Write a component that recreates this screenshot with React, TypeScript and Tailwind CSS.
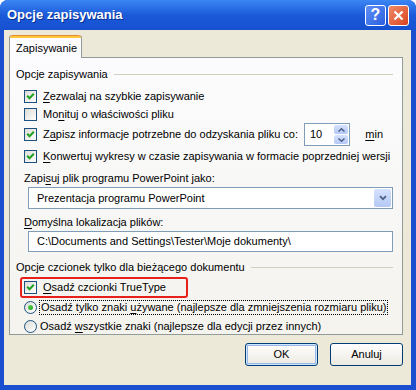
import React from "react";

function Check({ checked }: { checked: boolean }) {
  return (
    <span className="relative flex h-[13px] w-[13px] shrink-0 items-center justify-center border border-[#1c5180] bg-gradient-to-br from-[#dcdcd7] to-white">
      {checked && (
        <svg width="9" height="9" viewBox="0 0 9 9">
          <path d="M1.2 3.8 L3.5 6.2 L7.8 1.8" stroke="#21a121" strokeWidth="2" fill="none" />
        </svg>
      )}
    </span>
  );
}

function Radio({ checked }: { checked: boolean }) {
  return (
    <span className="flex h-[13px] w-[13px] shrink-0 items-center justify-center rounded-full border border-[#1c5180] bg-gradient-to-br from-[#dcdcd7] to-white">
      {checked && <span className="h-[5px] w-[5px] rounded-full bg-gradient-to-br from-[#55d751] to-[#21a121]" />}
    </span>
  );
}

function U({ children }: { children: React.ReactNode }) {
  return <span className="underline underline-offset-[2px]">{children}</span>;
}

function GroupLabel({ text }: { text: string }) {
  return (
    <div className="flex h-[14px] items-center pr-[9px]">
      <span className="whitespace-nowrap">{text}</span>
      <span className="ml-[6px] h-px flex-1 bg-[#d0d0bf]" />
    </div>
  );
}

export default function App() {
  return (
    <div className="h-[390px] w-[416px] overflow-hidden bg-white font-['Liberation_Sans',Arial,sans-serif] text-[11px] text-black">
      <div className="flex h-[390px] w-[416px] flex-col rounded-t-[8px] bg-[#1a4fd0]">
        {/* title bar */}
        <div className="flex h-[30px] shrink-0 items-center rounded-t-[8px] bg-gradient-to-b from-[#3c86f5] via-[#1b5ad9] to-[#1550cf] pl-[7px] pr-[7px]">
          <span className="flex-1 text-[13px] font-bold text-white [text-shadow:1px_1px_0_#0a2f8f]">Opcje zapisywania</span>
          <div className="flex gap-[2px]">
            <div className="flex h-[21px] w-[21px] items-center justify-center rounded-[3px] border border-white bg-gradient-to-br from-[#5f8ff5] to-[#2a5ee0] text-[16px] font-bold leading-none text-white">?</div>
            <div className="flex h-[21px] w-[21px] items-center justify-center rounded-[3px] border border-white bg-gradient-to-br from-[#f08a66] to-[#d8421c]">
              <svg width="11" height="11" viewBox="0 0 11 11">
                <path d="M1.5 1.5 L9.5 9.5 M9.5 1.5 L1.5 9.5" stroke="white" strokeWidth="2.2" />
              </svg>
            </div>
          </div>
        </div>
        {/* body */}
        <div className="ml-[4px] mr-[5px] flex h-[355px] flex-col bg-[#ece9d8] pl-[5px] pr-[8px] pt-[5px]">
          {/* tab */}
          <div className="relative z-10 -mb-px flex h-[23px] w-[73px] flex-col rounded-t-[3px] border-x border-[#919b9c] bg-[#fcfcfe]">
            <div className="h-[3px] rounded-t-[3px] border-t border-[#e68b2c] bg-[#ffc83c]" />
            <div className="flex flex-1 items-center pl-[6px]">Zapisywanie</div>
          </div>
          {/* panel */}
          <div className="flex h-[278px] flex-col border border-[#919b9c] bg-gradient-to-b from-[#fcfcfe] to-[#f4f3ee] pl-[6px] pt-[9px]">
            <GroupLabel text="Opcje zapisywania" />
            <div className="mt-[6px] flex h-[18px] items-center gap-[6px] pl-[8px]">
              <Check checked />
              <span><U>Z</U>ezwalaj na szybkie zapisywanie</span>
            </div>
            <div className="flex h-[18px] items-center gap-[6px] pl-[8px]">
              <Check checked={false} />
              <span>Mo<U>n</U>ituj o właściwości pliku</span>
            </div>
            <div className="flex h-[23px] items-center gap-[6px] pl-[8px]">
              <Check checked />
              <span className="whitespace-nowrap">Z<U>a</U>pisz informacje potrzebne do odzyskania pliku co:</span>
              <div className="ml-auto flex h-[23px] w-[57px] items-stretch border border-[#7f9db9] bg-white">
                <span className="flex flex-1 items-center pl-[5px]">10</span>
                <div className="flex w-[16px] flex-col gap-px p-px">
                  <div className="flex flex-1 items-center justify-center rounded-[2px] bg-gradient-to-b from-[#d6e2fd] to-[#b4c8f6]">
                    <svg width="7" height="4" viewBox="0 0 7 4"><path d="M0.5 3.5 L3.5 0.8 L6.5 3.5" stroke="#4d6185" strokeWidth="1.5" fill="none" /></svg>
                  </div>
                  <div className="flex flex-1 items-center justify-center rounded-[2px] bg-gradient-to-b from-[#d6e2fd] to-[#b4c8f6]">
                    <svg width="7" height="4" viewBox="0 0 7 4"><path d="M0.5 0.5 L3.5 3.2 L6.5 0.5" stroke="#4d6185" strokeWidth="1.5" fill="none" /></svg>
                  </div>
                </div>
              </div>
              <span className="ml-[9px] mr-[19px]"><U>m</U>in</span>
            </div>
            <div className="mt-px flex h-[18px] items-center gap-[6px] pl-[8px]">
              <Check checked />
              <span className="whitespace-nowrap"><U>K</U>onwertuj wykresy w czasie zapisywania w formacie poprzedniej wersji</span>
            </div>
            <div className="mt-[6px] flex h-[14px] items-center pl-[8px]">
              Zapi<U>s</U>uj plik programu PowerPoint jako:
            </div>
            <div className="ml-[12px] mr-[9px] mt-[2px] flex h-[22px] items-stretch border border-[#7f9db9] bg-white">
              <span className="flex flex-1 items-center pl-[8px]">Prezentacja programu PowerPoint</span>
              <div className="m-px flex w-[17px] items-center justify-center rounded-[2px] bg-gradient-to-b from-[#d6e2fd] to-[#b4c8f6]">
                <svg width="8" height="6" viewBox="0 0 8 6"><path d="M1 1.2 L4 4.2 L7 1.2" stroke="#4d6185" strokeWidth="1.8" fill="none" /></svg>
              </div>
            </div>
            <div className="mt-[6px] flex h-[14px] items-center pl-[8px]">
              <U>D</U>omyślna lokalizacja plików:
            </div>
            <div className="ml-[12px] mr-[9px] mt-[2px] flex h-[21px] items-center border border-[#7f9db9] bg-white pl-[8px]">
              C:\Documents and Settings\Tester\Moje dokumenty\
            </div>
            <div className="mt-[8px]">
              <GroupLabel text="Opcje czcionek tylko dla bieżącego dokumentu" />
            </div>
            <div className="ml-[4px] mt-[3px] flex h-[21px] w-[168px] items-center gap-[6px] rounded-[3px] border-2 border-[#e8201c] pl-[2px]">
              <Check checked />
              <span><U>O</U>sadź czcionki TrueType</span>
            </div>
            <div className="mt-px flex h-[16px] items-center gap-[2px] pl-[8px]">
              <Radio checked />
              <span className="whitespace-nowrap border border-dotted border-black px-[1px] leading-[13px]">Osadź tylko znaki <U>u</U>żywane (najlepsze dla zmniejszenia rozmiaru pliku)</span>
            </div>
            <div className="mt-[3px] flex h-[16px] items-center gap-[3px] pl-[8px]">
              <Radio checked={false} />
              <span className="whitespace-nowrap">Osadź <U>w</U>szystkie znaki (najlepsze dla edycji przez innych)</span>
            </div>
          </div>
          {/* buttons */}
          <div className="mt-[8px] flex justify-end gap-[12px] pr-[-1px]">
            <button className="flex h-[23px] w-[73px] items-center justify-center rounded-[3px] border border-[#003c74] bg-gradient-to-b from-white to-[#ece9e0] shadow-[inset_0_0_0_1px_#cee7ff,inset_0_0_0_2px_#98b8ea]">OK</button>
            <button className="flex h-[23px] w-[73px] items-center justify-center rounded-[3px] border border-[#003c74] bg-gradient-to-b from-white to-[#ece9e0]">Anuluj</button>
          </div>
        </div>
      </div>
    </div>
  );
}
